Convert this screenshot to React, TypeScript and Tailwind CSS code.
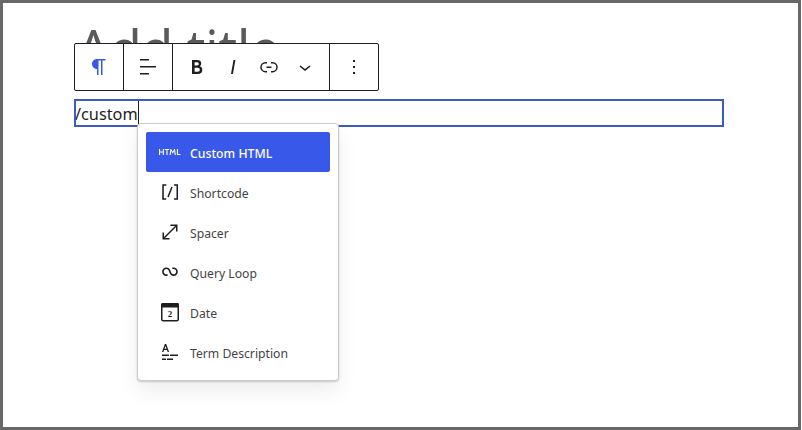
import React from 'react';

const Icon = ({ d, className = 'fill-[#1e1e1e]' }: { d: string; className?: string }) => (
  <svg viewBox="0 0 24 24" width="24" height="24" className={`shrink-0 ${className}`}>
    <path d={d} />
  </svg>
);

const icons = {
  paragraph: 'm9.99609 14v-.2251l.00391.0001v6.225h1.5v-14.5h2.5v14.5h1.5v-14.5h3v-1.5h-8.50391c-2.76142 0-5 2.23858-5 5 0 2.7614 2.23858 5 5 5z',
  alignLeft: 'M13 5.5H4V4h9v1.5Zm7 7H4V11h16v1.5Zm-7 7H4V18h9v1.5Z',
  bold: 'M14.7 11.3c1-.6 1.5-1.6 1.5-3 0-2.3-1.3-3.4-4-3.4H7v14h5.8c1.4 0 2.5-.3 3.3-1 .8-.7 1.2-1.7 1.2-2.9.1-1.9-.8-3.1-2.6-3.7zm-5.1-4h2.3c.6 0 1.1.1 1.4.4.3.3.5.7.5 1.2s-.2 1-.5 1.2c-.3.3-.8.4-1.4.4H9.6V7.3zm4.6 9c-.4.3-1 .4-1.7.4H9.6v-3.9h2.9c.7 0 1.3.2 1.7.5.4.3.6.8.6 1.5s-.2 1.2-.6 1.5z',
  italic: 'M12.5 5L10 19h1.9l2.5-14z',
  link: 'M10 17.389H8.444A5.194 5.194 0 1 1 8.444 7H10v1.5H8.444a3.694 3.694 0 0 0 0 7.389H10v1.5ZM14 7h1.556a5.194 5.194 0 0 1 0 10.39H14v-1.5h1.556a3.694 3.694 0 0 0 0-7.39H14V7Zm-4.5 6h5v-1.5h-5V13Z',
  chevronDown: 'M17.5 11.6L12 16l-5.5-4.4.9-1.2L12 14l4.5-3.6 1 1.2z',
  more: 'M13 19h-2v-2h2v2zm0-6h-2v-2h2v2zm0-6h-2V5h2v2z',
  html: 'M4.8 11.4H2.1V9H1v6h1.1v-2.6h2.7V15h1.1V9H4.8v2.4zm1.9-1.3h1.7V15h1.1v-4.9h1.7V9H6.7v1.1zM16.2 9l-1.5 2.7L13.3 9h-.9l-.8 6h1.1l.5-4 1.5 2.8 1.5-2.8.5 4h1.1L17 9h-.8zm3.8 5V9h-1.1v6h3.6v-1H20z',
  shortcode: 'M16 4.2v1.5h2.5v12.5H16v1.5h4V4.2h-4zM4.2 19.8h4v-1.5H5.8V5.8h2.5V4.2h-4l-.1 15.6zm5.1-3.1l1.4.6 4-10-1.4-.6-4 10z',
  spacer: 'M7 18h4.5v1.5h-7v-7H6V17L17 6h-4.5V4.5h7v7H18V7L7 18Z',
  loop: 'M18.1823 11.6392C18.1823 13.0804 17.0139 14.2487 15.5727 14.2487C14.3579 14.2487 13.335 13.4179 13.0453 12.2922L13.0377 12.2625L13.0278 12.2335L12.3985 10.377L12.3942 10.3785C11.8571 8.64997 10.246 7.39405 8.33961 7.39405C5.99509 7.39405 4.09448 9.29465 4.09448 11.6392C4.09448 13.9837 5.99509 15.8843 8.33961 15.8843C8.88499 15.8843 9.40822 15.781 9.88943 15.5923L9.29212 14.0697C8.99812 14.185 8.67729 14.2487 8.33961 14.2487C6.89838 14.2487 5.73003 13.0804 5.73003 11.6392C5.73003 10.1979 6.89838 9.02959 8.33961 9.02959C9.55444 9.02959 10.5773 9.86046 10.867 10.9862L10.8772 11.0259L10.8913 11.0643L11.4999 12.7631C12.0156 14.5133 13.6367 15.8843 15.5727 15.8843C17.9172 15.8843 19.8178 13.9837 19.8178 11.6392C19.8178 9.29465 17.9172 7.39404 15.5727 7.39404C15.0287 7.39404 14.5066 7.49673 14.0264 7.68482L14.6223 9.20781C14.9158 9.09293 15.2358 9.02959 15.5727 9.02959C17.0139 9.02959 18.1823 10.1979 18.1823 11.6392Z',
  term: 'M6.08 10.103h2.914L9.657 12h1.417L8.23 4H6.846L4 12h1.417l.663-1.897Zm1.463-4.137.994 2.857h-2l1.006-2.857ZM11 16H4v-1.5h7V16Zm1 0h8v-1.5h-8V16Zm-4 4H4v-1.5h4V20Zm7-1.5V20H9v-1.5h6Z',
};

const DateIcon = () => (
  <svg viewBox="0 0 24 24" width="24" height="24" className="shrink-0">
    <rect x="3.75" y="3.75" width="16.5" height="17" rx="1.5" fill="none" stroke="#1e1e1e" strokeWidth="1.5" />
    <rect x="3" y="3" width="18" height="4.5" rx="1.5" fill="#1e1e1e" />
    <text x="12" y="17" textAnchor="middle" fontSize="9" fontWeight="700" fontFamily="'Liberation Serif', serif" fill="#1e1e1e">2</text>
  </svg>
);

const items = [
  { label: 'Shortcode', icon: <Icon d={icons.shortcode} /> },
  { label: 'Spacer', icon: <Icon d={icons.spacer} /> },
  { label: 'Query Loop', icon: <Icon d={icons.loop} /> },
  { label: 'Date', icon: <DateIcon /> },
  { label: 'Term Description', icon: <Icon d={icons.term} /> },
];

export default function App() {
  return (
    <div className="h-[430px] w-[802px] overflow-hidden bg-white font-['Noto_Sans',sans-serif]">
      <div className="relative h-full w-[801px] border-[3px] border-[#686868] pl-[71px] pt-[10px]">
        <h1 className="h-[86px] pl-[3px] text-[51.5px] font-normal leading-[68px] text-[#5a5a5a]">Add title</h1>

        {/* Block toolbar */}
        <div className="absolute left-[71px] top-[40px] flex h-[48px] w-[305px] rounded-[2px] border border-[#1e1e1e] bg-white">
          <div className="flex w-[49px] items-center justify-center border-r border-[#1e1e1e]">
            <Icon d={icons.paragraph} className="fill-[#3858e9]" />
          </div>
          <div className="flex w-[49px] items-center justify-center border-r border-[#1e1e1e]">
            <Icon d={icons.alignLeft} />
          </div>
          <div className="flex w-[157px] items-center border-r border-[#1e1e1e] pl-[6px]">
            <span className="flex w-9 justify-center"><Icon d={icons.bold} /></span>
            <span className="flex w-9 justify-center"><Icon d={icons.italic} /></span>
            <span className="flex w-9 justify-center"><Icon d={icons.link} /></span>
            <span className="flex w-9 justify-center"><Icon d={icons.chevronDown} /></span>
          </div>
          <div className="flex flex-1 items-center justify-center">
            <Icon d={icons.more} />
          </div>
        </div>

        {/* Paragraph block */}
        <div className="flex h-[28px] w-[650px] items-center overflow-hidden border-2 border-[#3d5ac8] text-[16.3px] leading-[24px] text-[#1e1e1e]">
          <span className="-ml-[1px] pt-[1px]">/custom</span>
          <span className="h-[24px] w-px bg-[#1e1e1e]" />
        </div>

        {/* Inserter popover */}
        <div className="absolute left-[134px] top-[120px] flex h-[258px] w-[202px] flex-col rounded-[4px] border border-[#cccccc] bg-white p-2 shadow-[0_1px_2px_rgba(0,0,0,0.18),0_10px_20px_rgba(0,0,0,0.07)]">
          <div className="flex h-[40px] shrink-0 items-center gap-2 rounded-[2px] bg-[#3858e9] px-3 text-[12.25px] text-white">
            <Icon d={icons.html} className="fill-white" />
            <span className="pt-[4px] font-medium">Custom HTML</span>
          </div>
          {items.map((item) => (
            <div key={item.label} className="flex h-[40px] shrink-0 items-center gap-2 px-3 text-[12.2px] text-[#444444]">
              {item.icon}
              <span className="pt-[4px]">{item.label}</span>
            </div>
          ))}
        </div>
      </div>
    </div>
  );
}
